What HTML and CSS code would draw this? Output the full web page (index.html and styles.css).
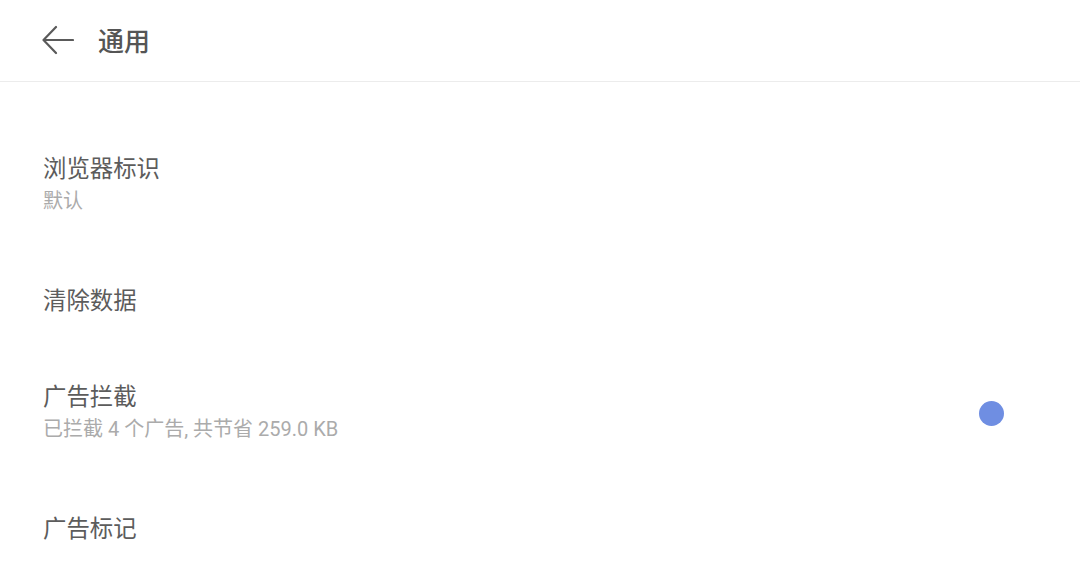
FILE: index.html
```html
<!DOCTYPE html>
<html lang="zh-CN">
<head>
<meta charset="utf-8">
<link rel="stylesheet" href="styles.css">
</head>
<body>
<header class="topbar">
  <svg class="back" width="32" height="30" viewBox="0 0 32 30" aria-hidden="true">
    <path d="M14 2 L1.5 15 L14 28 M1.5 15 H31" fill="none" stroke="#5a5a5a" stroke-width="2.2" stroke-linecap="round" stroke-linejoin="round"/>
  </svg>
  <h1 class="title">通用</h1>
</header>
<main class="list">
  <div class="row">
    <div class="text">
      <div class="label">浏览器标识</div>
      <div class="sub">默认</div>
    </div>
  </div>
  <div class="row">
    <div class="text">
      <div class="label">清除数据</div>
    </div>
  </div>
  <div class="row">
    <div class="text">
      <div class="label">广告拦截</div>
      <div class="sub">已拦截 4 个广告, 共节省 259.0 KB</div>
    </div>
    <span class="knob"></span>
  </div>
  <div class="row">
    <div class="text">
      <div class="label">广告标记</div>
    </div>
  </div>
</main>
<div class="shade"></div>
</body>
</html>
```
FILE: styles.css
```css
html, body {
  margin: 0;
  padding: 0;
  background: #ffffff;
  overflow: hidden;
}
body {
  width: 1080px;
  height: 563px;
  font-family: Roboto, "Noto Sans CJK SC", sans-serif;
  color: #5c5c5c;
  position: relative;
}
.topbar {
  height: 81px;
  display: flex;
  align-items: center;
  padding-left: 42px;
  border-bottom: 1px solid #ececec;
  box-sizing: content-box;
}
.back {
  display: block;
  margin-top: -1px;
}
.title {
  margin: -2px 0 0 24px;
  font-size: 26px;
  font-weight: 500;
  color: #555555;
  line-height: 30px;
  font-family: "Noto Sans CJK SC", sans-serif;
}
.list {
  padding-top: 46px;
}
.row {
  height: 114px;
  display: flex;
  align-items: center;
  justify-content: space-between;
  padding: 0 76px 0 43px;
}
.label {
  font-family: "Noto Sans CJK SC", sans-serif;
  font-size: 23.4px;
  line-height: 32px;
  color: #5c5c5c;
}
.sub {
  font-size: 20px;
  line-height: 36px;
  color: #ababab;
}
.knob {
  width: 25px;
  height: 25px;
  border-radius: 50%;
  background: #6f8ee2;
  margin-top: 1px;
}
.shade {
  position: absolute;
  left: 976px;
  top: 400px;
  right: 0;
  bottom: 0;
  background: #f9fafc;
  z-index: -1;
}
```
